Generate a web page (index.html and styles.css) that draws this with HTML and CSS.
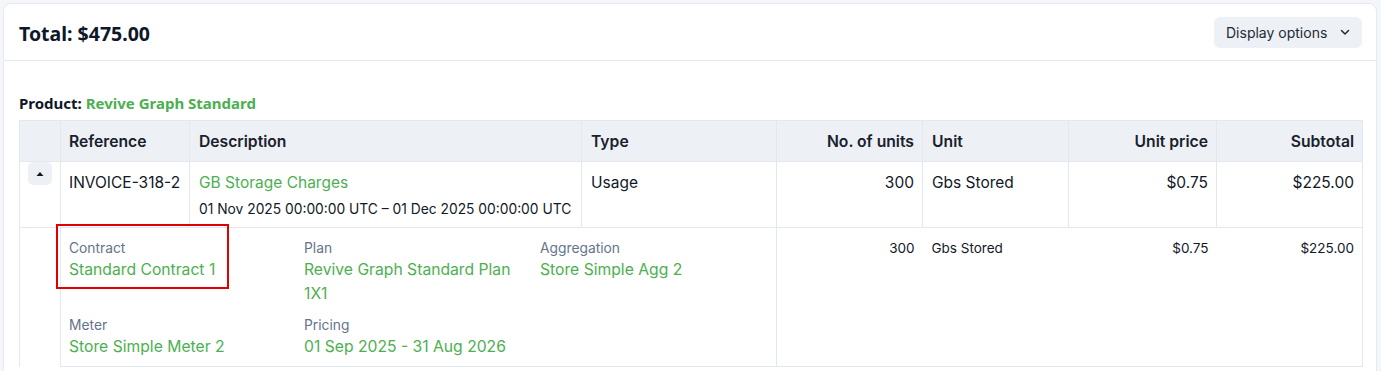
FILE: index.html
```html
<!DOCTYPE html>
<html>
<head>
<meta charset="utf-8">
<link rel="stylesheet" href="styles.css">
</head>
<body>
<div class="card">
  <div class="card-header">
    <h2 class="total">Total: $475.00</h2>
    <button class="display-btn">Display options
      <svg class="chev" width="10" height="7" viewBox="0 0 10 7"><path d="M1.5 1.5 L5 5 L8.5 1.5" fill="none" stroke="#1f2937" stroke-width="1.5" stroke-linecap="round" stroke-linejoin="round"/></svg>
    </button>
  </div>
  <div class="card-body">
    <div class="product">Product: <span class="green">Revive Graph Standard</span></div>
    <table class="items">
      <colgroup>
        <col style="width:41px"><col style="width:129px"><col style="width:392px"><col style="width:195px">
        <col style="width:146px"><col style="width:146px"><col style="width:148px"><col style="width:146px">
      </colgroup>
      <thead>
        <tr>
          <th></th>
          <th>Reference</th>
          <th>Description</th>
          <th>Type</th>
          <th class="r">No. of units</th>
          <th>Unit</th>
          <th class="r">Unit price</th>
          <th class="r">Subtotal</th>
        </tr>
      </thead>
      <tbody>
        <tr class="main-row">
          <td class="toggle-cell"><span class="toggle"><svg width="8" height="6" viewBox="0 0 8 6"><path d="M0.5 5 L4 1 L7.5 5 Z" fill="#111827"/></svg></span></td>
          <td>INVOICE-318-2</td>
          <td><div class="green">GB Storage Charges</div><div class="period">01 Nov 2025 00:00:00 UTC – 01 Dec 2025 00:00:00 UTC</div></td>
          <td>Usage</td>
          <td class="r">300</td>
          <td>Gbs Stored</td>
          <td class="r">$0.75</td>
          <td class="r">$225.00</td>
        </tr>
        <tr class="detail-row">
          <td class="blank"></td>
          <td colspan="3" class="detail">
            <div class="detail-grid">
              <div class="field highlight"><div class="label">Contract</div><div class="value">Standard Contract 1</div></div>
              <div class="field"><div class="label">Plan</div><div class="value">Revive Graph Standard Plan 1X1</div></div>
              <div class="field"><div class="label">Aggregation</div><div class="value">Store Simple Agg 2</div></div>
              <div class="field"><div class="label">Meter</div><div class="value">Store Simple Meter 2</div></div>
              <div class="field"><div class="label">Pricing</div><div class="value">01 Sep 2025 - 31 Aug 2026</div></div>
            </div>
          </td>
          <td class="r sm nb">300</td>
          <td class="sm nb">Gbs Stored</td>
          <td class="r sm nb">$0.75</td>
          <td class="r sm last">$225.00</td>
        </tr>
      </tbody>
    </table>
  </div>
</div>
</body>
</html>
```
FILE: styles.css
```css
* { box-sizing: border-box; }
html, body { margin: 0; padding: 0; }
body {
  background: #f4f6f9;
  font-family: Inter, "Noto Sans", sans-serif;
  color: #111827;
  padding: 3px 4px 0 3px;
  overflow: hidden;
}
.card {
  background: #fff;
  border: 1px solid #e6eaf0;
  border-radius: 8px;
  min-height: 380px;
}
.card-header {
  height: 57px;
  display: flex;
  align-items: center;
  justify-content: space-between;
  padding: 0 14px 0 15px;
  border-bottom: 1px solid #e2e8f0;
}
.total {
  margin: 3px 0 0 0;
  font-family: "Noto Sans", sans-serif;
  font-size: 19.5px;
  font-weight: 700;
  color: #0f172a;
}
.display-btn {
  height: 31px;
  width: 148px;
  border: none;
  background: #edf1f5;
  border-radius: 6px;
  font-family: Inter, sans-serif;
  font-size: 14px;
  color: #1f2937;
  display: flex;
  align-items: center;
  justify-content: flex-start;
  gap: 13px;
  padding: 0 0 0 12px;
}
.card-body {
  padding: 32px 14px 0 15px;
}
.product {
  font-family: "Noto Sans", sans-serif;
  font-size: 15px;
  font-weight: 700;
  line-height: 20px;
  color: #0f172a;
  margin-bottom: 7px;
}
.green { color: #4caf50; }
.items {
  border-collapse: collapse;
  table-layout: fixed;
  width: 1343px;
  font-size: 15.5px;
}
.items th, .items td {
  border: 1px solid #e2e8f0;
  padding: 0 8px 0 9px;
  text-align: left;
  vertical-align: top;
}
.items td:first-child, .items th:first-child { padding: 0; }
.items th {
  background: #edf1f6;
  font-weight: 600;
  font-size: 15.7px;
  height: 41px;
  vertical-align: middle;
  color: #1a202c;
}
.items th:nth-child(2), .items td:nth-child(2) { padding-left: 8px; }
.items .r { text-align: right; }
.main-row td {
  height: 66px;
  padding-top: 11px;
  line-height: 20px;
}
.period {
  font-size: 13.8px;
  margin-top: 7px;
  line-height: 18px;
  white-space: nowrap;
}
.toggle {
  display: flex;
  align-items: center;
  justify-content: center;
  width: 24px;
  height: 23px;
  margin: 0 0 0 8px;
  background: #edf1f5;
  border-radius: 5px;
}
.main-row .toggle-cell { padding-top: 11px; }
.detail-row td { padding-top: 11px; }
.detail-row td.blank { border-bottom: none; }
.detail-row td.nb { border-left: none; border-right: none; }
.detail-row td.last { border-left: none; }
.detail-row .sm { font-size: 13.5px; line-height: 18px; }
.detail { padding: 11px 8px 7px 8px !important; }
.detail-grid {
  display: grid;
  grid-template-columns: 235px 236px 220px;
  row-gap: 10px;
}
.field { padding-right: 16px; position: relative; }
.label {
  font-size: 13.8px;
  line-height: 18px;
  color: #64748b;
  margin-bottom: 1px;
}
.value {
  font-size: 15.7px;
  line-height: 24px;
  color: #4caf50;
}
.highlight::after {
  content: "";
  box-sizing: border-box;
  position: absolute;
  left: -13px;
  top: -15px;
  width: 173px;
  height: 65px;
  border: 2px solid #e00000;
  pointer-events: none;
}
```
